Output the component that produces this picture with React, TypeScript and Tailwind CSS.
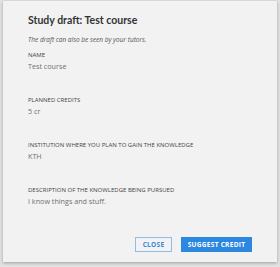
export default function App() {
  const fields = [
    { label: "NAME", value: "Test course", mb: "mb-[24px]" },
    { label: "PLANNED CREDITS", value: "5 cr", mb: "mb-[24px]" },
    { label: "INSTITUTION WHERE YOU PLAN TO GAIN THE KNOWLEDGE", value: "KTH", mb: "mb-[24px]" },
    { label: "DESCRIPTION OF THE KNOWLEDGE BEING PURSUED", value: "I know things and stuff.", mb: "" },
  ];
  return (
    <div className="w-[280px] h-[267px] bg-[#e2e2e2] pl-[3px] pt-[1px] overflow-hidden font-['Open_Sans',sans-serif]">
      <div className="w-[274px] h-[261px] bg-[#f2f2f2] shadow-[0_1px_3px_rgba(0,0,0,0.3)] flex flex-col px-[25px] pt-[11px]">
        <div className="font-['Lato',sans-serif] text-[10.5px] leading-[16px] font-bold text-[#333]">Study draft: Test course</div>
        <div className="mt-[7px] text-[6.5px] leading-[9px] italic text-[#555]">The draft can also be seen by your tutors.</div>
        <div className="mt-[7px] flex flex-col">
          {fields.map((f) => (
            <div key={f.label} className={f.mb}>
              <div className="text-[6px] leading-[8px] font-medium text-[#444]">{f.label}</div>
              <div className="mt-[1px] text-[7.2px] leading-[12px] text-[#707070]">{f.value}</div>
            </div>
          ))}
        </div>
        <div className="flex-1" />
        <div className="flex justify-end gap-[9px] mb-[10px]">
          <button className="w-[37px] h-[15px] border border-[#8fbcec] bg-transparent text-[#3a86d6] text-[6.5px] font-bold tracking-[0.3px] flex items-center justify-center">CLOSE</button>
          <button className="w-[71px] h-[15px] bg-[#2b87e0] text-white text-[6.5px] font-bold tracking-[0.3px] flex items-center justify-center">SUGGEST CREDIT</button>
        </div>
      </div>
    </div>
  );
}
